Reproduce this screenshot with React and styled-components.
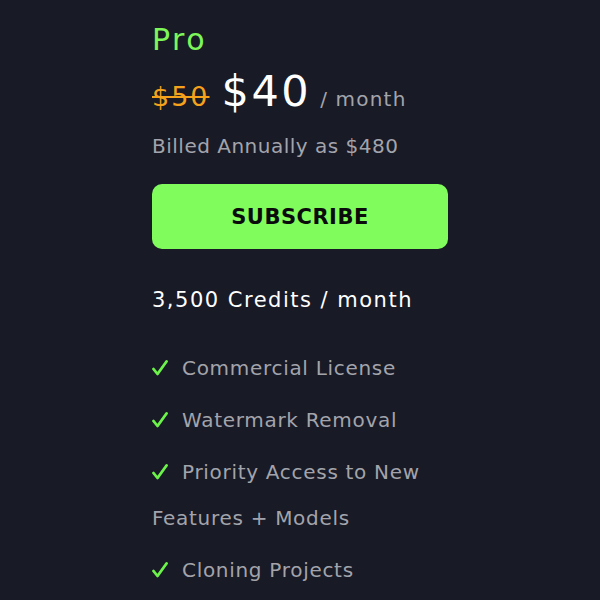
import React from "react";
import styled, { createGlobalStyle } from "styled-components";

const GlobalStyle = createGlobalStyle`
  html, body {
    margin: 0;
    padding: 0;
    background: #181a26;
  }
  body {
    font-family: "DejaVu Sans", "Open Sans", sans-serif;
  }
`;

const Page = styled.div`
  width: 600px;
  height: 600px;
  background: #181a26;
  overflow: hidden;
  display: flex;
  justify-content: center;
`;

const Card = styled.div`
  width: 296px;
  padding-top: 20px;
`;

const PlanName = styled.h2`
  margin: 0;
  font-size: 30px;
  font-weight: 400;
  line-height: 40px;
  letter-spacing: 2.5px;
  color: #7df65a;
`;

const PriceRow = styled.div`
  display: flex;
  align-items: baseline;
  margin-top: 6px;
  height: 52px;
`;

const OldPrice = styled.span`
  font-size: 27px;
  letter-spacing: 2px;
  color: #f4a21c;
  text-decoration: line-through;
  margin-right: 12px;
`;

const Price = styled.span`
  font-size: 43px;
  letter-spacing: 2.5px;
  color: #ffffff;
  margin-right: 9px;
`;

const Period = styled.span`
  font-size: 20px;
  letter-spacing: 1.2px;
  color: #a3a4ab;
`;

const Billed = styled.p`
  margin: 15px 0 0;
  font-size: 20px;
  line-height: 26px;
  letter-spacing: 0.5px;
  color: #a3a4ab;
`;

const SubscribeButton = styled.button`
  display: block;
  width: 100%;
  height: 65px;
  margin-top: 25px;
  border: none;
  border-radius: 10px;
  background: #80fc5c;
  color: #0b0b0b;
  font-family: inherit;
  font-size: 21px;
  font-weight: 700;
  letter-spacing: 0.5px;
  cursor: pointer;
`;

const Credits = styled.p`
  margin: 37px 0 0;
  font-size: 21px;
  line-height: 28px;
  letter-spacing: 1.5px;
  color: #ffffff;
`;

const Features = styled.ul`
  list-style: none;
  margin: 31px 0 0;
  padding: 0;
  display: flex;
  flex-direction: column;
  gap: 6px;
`;

const Feature = styled.li`
  font-size: 20px;
  line-height: 46px;
  letter-spacing: 0.7px;
  color: #a3a4ab;
`;

const CheckIcon = styled.svg`
  width: 16px;
  height: 16px;
  margin-right: 14px;
  vertical-align: -1px;
`;

const Check = () => (
  <CheckIcon viewBox="0 0 16 16">
    <path
      d="M1.5 9 L5.5 14 L14.5 1.5"
      fill="none"
      stroke="#6cf24a"
      strokeWidth="2.8"
      strokeLinecap="round"
      strokeLinejoin="round"
    />
  </CheckIcon>
);

const features = [
  "Commercial License",
  "Watermark Removal",
  "Priority Access to New Features + Models",
  "Cloning Projects",
];

const App = () => {
  return (
    <Page>
      <GlobalStyle />
      <Card>
        <PlanName>Pro</PlanName>
        <PriceRow>
          <OldPrice>$50</OldPrice>
          <Price>$40</Price>
          <Period>/ month</Period>
        </PriceRow>
        <Billed>Billed Annually as $480</Billed>
        <SubscribeButton>SUBSCRIBE</SubscribeButton>
        <Credits>3,500 Credits / month</Credits>
        <Features>
          {features.map((f) => (
            <Feature key={f}>
              <Check />
              {f}
            </Feature>
          ))}
        </Features>
      </Card>
    </Page>
  );
};

export default App;
